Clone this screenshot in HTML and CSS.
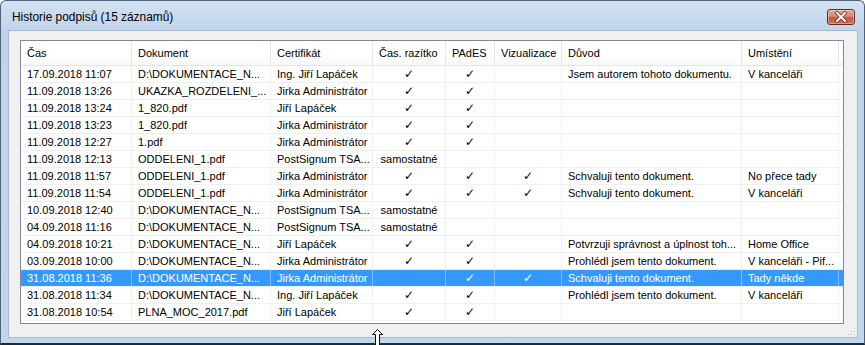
FILE: index.html
```html
<!DOCTYPE html>
<html lang="cs">
<head>
    <meta charset="UTF-8">
    <title>Historie podpisů</title>
    <link rel="stylesheet" href="styles.css">
</head>
<body>
    <div class="window">
        <!-- Title bar -->
        <div class="titlebar">
            <span class="title">Historie podpisů (15 záznamů)</span>
            <button class="close-btn">
                <svg viewBox="0 0 28 16" width="28" height="16">
                    <path d="M10 4 L18 12 M18 4 L10 12" stroke="#6b2418" stroke-width="3.4" stroke-linecap="square"/>
                    <path d="M10 4 L18 12 M18 4 L10 12" stroke="#ffffff" stroke-width="2" stroke-linecap="square"/>
                </svg>
            </button>
        </div>

        <div class="frame">
            <div class="client">
                <div class="list">
                    <div class="list-head">
                        <div class="cell">Čas</div>
                        <div class="cell">Dokument</div>
                        <div class="cell">Certifikát</div>
                        <div class="cell">Čas. razítko</div>
                        <div class="cell">PAdES</div>
                        <div class="cell">Vizualizace</div>
                        <div class="cell">Důvod</div>
                        <div class="cell">Umístění</div>
                    </div>
                    <div id="rows"></div>
                </div>

                <!-- Size grip -->
                <svg class="size-grip" viewBox="0 0 10 10" width="10" height="10">
                    <g fill="#ffffff">
                        <rect x="9" y="9" width="1" height="1"/><rect x="6" y="9" width="1" height="1"/><rect x="3" y="9" width="1" height="1"/>
                        <rect x="9" y="6" width="1" height="1"/><rect x="6" y="6" width="1" height="1"/><rect x="9" y="3" width="1" height="1"/>
                    </g>
                    <g fill="#b8b8b8">
                        <rect x="8" y="8" width="1" height="1"/><rect x="5" y="8" width="1" height="1"/><rect x="2" y="8" width="1" height="1"/>
                        <rect x="8" y="5" width="1" height="1"/><rect x="5" y="5" width="1" height="1"/><rect x="8" y="2" width="1" height="1"/>
                    </g>
                </svg>
            </div>
        </div>

        <!-- Mouse cursor -->
        <svg class="cursor" viewBox="0 0 11 17" width="11" height="17">
            <path d="M5.5 0.5 L10.5 5.5 L7.5 5.5 L7.5 16.5 L3.5 16.5 L3.5 5.5 L0.5 5.5 Z" fill="#ffffff" stroke="#000000" stroke-width="1"/>
        </svg>
    </div>

    <script src="script.js"></script>
</body>
</html>
```

FILE: styles.css
```css
* {
    box-sizing: border-box;
}

body {
    margin: 0;
    width: 865px;
    height: 345px;
    overflow: hidden;
    font-family: "Liberation Sans", Arial, sans-serif;
    font-size: 11px;
    color: #000;
}

.window {
    position: relative;
    width: 865px;
    height: 345px;
    display: flex;
    flex-direction: column;
    border: 1px solid #4f6176;
    border-bottom-width: 2px;
    border-bottom-color: #1f2b38;
    border-radius: 6px 6px 0 0;
    background: linear-gradient(to bottom, #d3e2f2, #bfd3ea 30px, #c2d6ec);
}

.titlebar {
    height: 29px;
    display: flex;
    align-items: flex-start;
    justify-content: space-between;
    padding: 8px 9px 0 11px;
}

.title {
    font-size: 11.9px;
    line-height: 17px;
    color: #000;
}

.close-btn {
    width: 28px;
    height: 16px;
    padding: 0;
    border: 1px solid #6a2c22;
    border-radius: 3px;
    background: linear-gradient(to bottom, #e3a999, #d68a77 45%, #c55a44 55%, #cb6e57);
    box-shadow: inset 0 0 0 1px rgba(255, 255, 255, 0.35);
    display: flex;
    align-items: center;
    justify-content: center;
    overflow: hidden;
}

.close-btn svg {
    display: block;
    margin: -1px;
}

.frame {
    flex: 1;
    display: flex;
    padding: 0 6px 5px 7px;
}

.client {
    position: relative;
    flex: 1;
    display: flex;
    background: #f0f0f0;
    border: 1px solid #a7bad1;
    padding: 9px 13px 13px 11px;
}

.list {
    flex: 1;
    background: #fff;
    border: 1px solid #828790;
    overflow: hidden;
}

.list-head,
.list-row {
    display: grid;
    grid-template-columns: 111px 139px 102px 73px 49px 67px 180px 97px;
}

.list-head {
    height: 25px;
    border-bottom: 1px solid #e5e5e5;
    background: linear-gradient(to bottom, #ffffff 50%, #f8f9fa);
}

.list-head .cell {
    line-height: 24px;
    padding: 0 6px;
    border-right: 1px solid #e3e5e8;
    white-space: nowrap;
    overflow: hidden;
}

.list-row {
    height: 17px;
    border-bottom: 1px solid #f0f0f0;
}

.list-row .cell {
    line-height: 16px;
    padding: 0 6px;
    border-right: 1px solid #f0f0f0;
    white-space: nowrap;
    overflow: hidden;
}

.list-row .center {
    text-align: center;
    padding: 0;
}

.check {
    font-family: "DejaVu Sans", sans-serif;
    font-size: 12px;
}

.list-row.selected {
    background: #3399ff;
    color: #fff;
}

.list-row.selected .cell {
    border-right-color: #7dbcff;
}

.size-grip {
    position: absolute;
    right: 1px;
    bottom: 1px;
}

.cursor {
    position: absolute;
    left: 371px;
    top: 328px;
}
```

FILE: script.js
```js
// Signature history rows
const rows = [
    ['17.09.2018 11:07', 'D:\\DOKUMENTACE_N...', 'Ing. Jiří Lapáček', true, true, false, 'Jsem autorem tohoto dokumentu.', 'V kanceláři'],
    ['11.09.2018 13:26', 'UKAZKA_ROZDELENI_...', 'Jirka Administrátor', true, true, false, '', ''],
    ['11.09.2018 13:24', '1_820.pdf', 'Jiří Lapáček', true, true, false, '', ''],
    ['11.09.2018 13:23', '1_820.pdf', 'Jirka Administrátor', true, true, false, '', ''],
    ['11.09.2018 12:27', '1.pdf', 'Jirka Administrátor', true, true, false, '', ''],
    ['11.09.2018 12:13', 'ODDELENI_1.pdf', 'PostSignum TSA...', 'samostatné', false, false, '', ''],
    ['11.09.2018 11:57', 'ODDELENI_1.pdf', 'Jirka Administrátor', true, true, true, 'Schvaluji tento dokument.', 'No přece tady'],
    ['11.09.2018 11:54', 'ODDELENI_1.pdf', 'Jirka Administrátor', true, true, true, 'Schvaluji tento dokument.', 'V kanceláři'],
    ['10.09.2018 12:40', 'D:\\DOKUMENTACE_N...', 'PostSignum TSA...', 'samostatné', false, false, '', ''],
    ['04.09.2018 11:16', 'D:\\DOKUMENTACE_N...', 'PostSignum TSA...', 'samostatné', false, false, '', ''],
    ['04.09.2018 10:21', 'D:\\DOKUMENTACE_N...', 'Jiří Lapáček', true, true, false, 'Potvrzuji správnost a úplnost toh...', 'Home Office'],
    ['03.09.2018 10:00', 'D:\\DOKUMENTACE_N...', 'Jirka Administrátor', true, true, false, 'Prohlédl jsem tento dokument.', 'V kanceláři - Pif...'],
    ['31.08.2018 11:36', 'D:\\DOKUMENTACE_N...', 'Jirka Administrátor', false, true, true, 'Schvaluji tento dokument.', 'Tady někde'],
    ['31.08.2018 11:34', 'D:\\DOKUMENTACE_N...', 'Ing. Jiří Lapáček', true, true, false, 'Prohlédl jsem tento dokument.', 'V kanceláři'],
    ['31.08.2018 10:54', 'PLNA_MOC_2017.pdf', 'Jiří Lapáček', true, true, false, '', '']
];

const selectedIndex = 12;
const container = document.getElementById('rows');

rows.forEach((row, i) => {
    const el = document.createElement('div');
    el.className = 'list-row' + (i === selectedIndex ? ' selected' : '');

    row.forEach((value, col) => {
        const cell = document.createElement('div');
        cell.className = 'cell';
        if (col >= 3 && col <= 5) {
            cell.classList.add('center');
            if (value === true) {
                cell.innerHTML = '<span class="check">✓</span>';
            } else if (value) {
                cell.textContent = value;
            }
        } else {
            cell.textContent = value;
        }
        el.appendChild(cell);
    });

    container.appendChild(el);
});
```
